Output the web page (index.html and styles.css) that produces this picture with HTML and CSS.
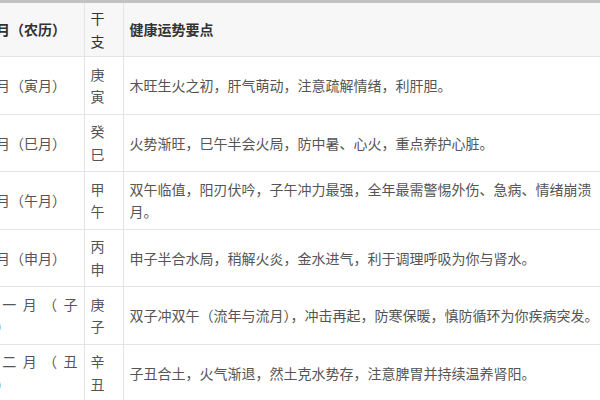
FILE: index.html
```html
<!DOCTYPE html>
<html lang="zh-CN">
<head>
<meta charset="utf-8">
<title>流月健康运势</title>
<link rel="stylesheet" href="styles.css">
</head>
<body>
<table class="fortune">
  <colgroup>
    <col class="c-month">
    <col class="c-gz">
    <col class="c-note">
  </colgroup>
  <thead>
    <tr>
      <th class="month">流月（农历）</th>
      <th class="gz">干支</th>
      <th class="note">健康运势要点</th>
    </tr>
  </thead>
  <tbody>
    <tr>
      <td class="month">正月（寅月）</td>
      <td class="gz">庚寅</td>
      <td class="note">木旺生火之初，肝气萌动，注意疏解情绪，利肝胆。</td>
    </tr>
    <tr>
      <td class="month">四月（巳月）</td>
      <td class="gz">癸巳</td>
      <td class="note">火势渐旺，巳午半会火局，防中暑、心火，重点养护心脏。</td>
    </tr>
    <tr>
      <td class="month">五月（午月）</td>
      <td class="gz">甲午</td>
      <td class="note">双午临值，阳刃伏吟，子午冲力最强，全年最需警惕外伤、急病、情绪崩溃月。</td>
    </tr>
    <tr>
      <td class="month">七月（申月）</td>
      <td class="gz">丙申</td>
      <td class="note">申子半合水局，稍解火炎，金水进气，利于调理呼吸为你与肾水。</td>
    </tr>
    <tr>
      <td class="month">十一月（子月）</td>
      <td class="gz">庚子</td>
      <td class="note">双子冲双午（流年与流月），冲击再起，防寒保暖，慎防循环为你疾病突发。</td>
    </tr>
    <tr>
      <td class="month">十二月（丑月）</td>
      <td class="gz">辛丑</td>
      <td class="note">子丑合土，火气渐退，然土克水势存，注意脾胃并持续温养肾阳。</td>
    </tr>
  </tbody>
</table>
</body>
</html>
```

FILE: styles.css
```css
html, body {
  margin: 0;
  padding: 0;
  background: #ffffff;
  overflow: hidden;
}

body {
  font-family: "Noto Sans CJK SC", "Noto Sans", sans-serif;
  font-size: 14px;
  color: #555555;
}

.fortune {
  border-collapse: collapse;
  table-layout: fixed;
  width: 639.5px;
  margin-left: -25px;
  border-top: 3px solid #c2c2c2;
}

.c-month { width: 108.5px; }
.c-gz { width: 39px; }
.c-note { width: 492px; }

.fortune th,
.fortune td {
  border: 1px solid #e4e4e4;
  padding: 5.75px 6px;
  line-height: 22.5px;
  vertical-align: middle;
  text-align: left;
  word-break: normal;
}

.fortune thead th {
  background: #f7f7f7;
  color: #333333;
  font-weight: bold;
  padding-top: 4px;
  padding-bottom: 4px;
}

.fortune thead th.gz {
  font-weight: normal;
}

.fortune .month {
  text-align: justify;
  text-justify: inter-character;
  text-spacing-trim: space-all;
}

.fortune .note {
  text-spacing-trim: normal;
}
```
